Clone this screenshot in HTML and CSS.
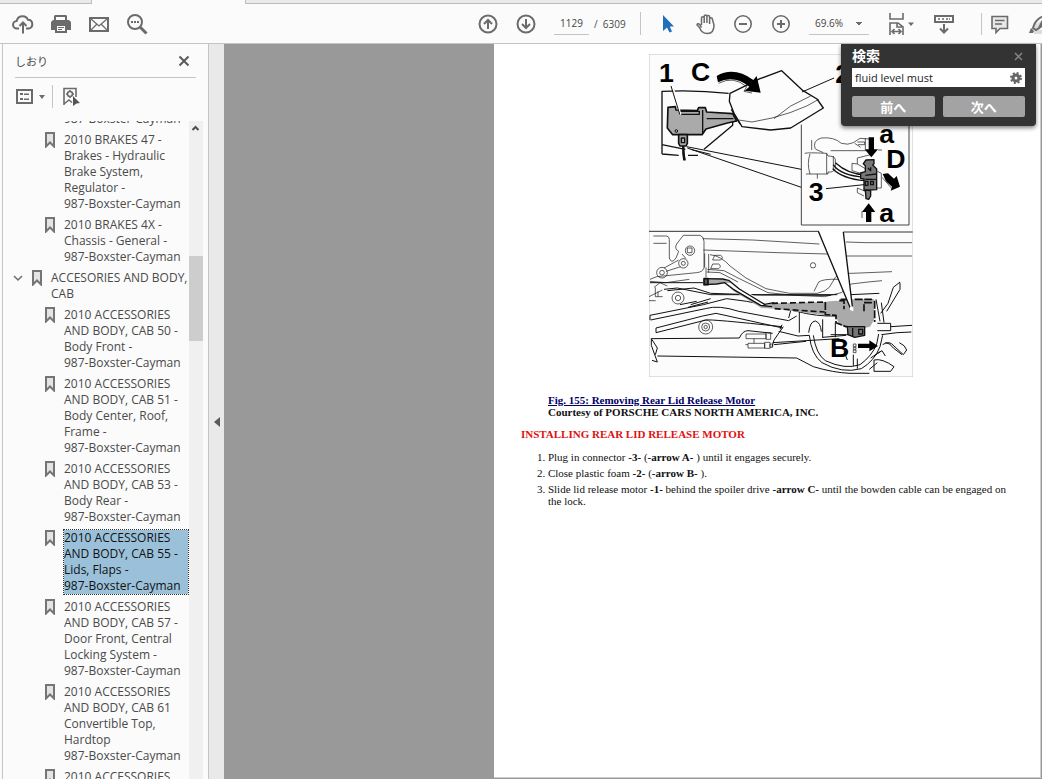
FILE: index.html
```
<!doctype html>
<html lang="ja">
  <head>
    <meta charset="utf-8">
    <meta name="viewport" content="width=device-width, initial-scale=1">
    <title>PDF Viewer</title>
    <link rel="stylesheet" href="styles.css">
  </head>
  <body>
    <div class="tabs">
      <div class="tab-active"></div>
    </div>

    <header class="toolbar">
      <div class="group">
        <button class="tool" aria-label="Upload">
          <svg width="22" height="22" viewBox="0 0 22 22" fill="none" stroke="#6b6b6b" stroke-width="2"><path d="M7 15.500H5a3.800 3.800 0 0 1-.3-7.600A6 6 0 0 1 16 6.800a4.400 4.400 0 0 1 .8 8.700H14M11 20.500V10M7.500 13 11 9.500l3.500 3.500"/></svg>
        </button>
        <button class="tool" aria-label="Print">
          <svg width="22" height="22" viewBox="0 0 22 22" fill="#6b6b6b"><path d="M5 2h11l1 1v4H4V3z"/><path d="M6 4h9v3H6z" fill="#fbfbfb"/><path d="M3 7h16l2 2v8h-4v-5H5v5H1V9z"/><path d="M5 12h12v8H5z"/><path d="M7 13h8v5H7z" fill="#fbfbfb"/><path d="M8 14h6v1H8zM8 16h4v1H8z"/></svg>
        </button>
        <button class="tool" aria-label="Mail">
          <svg width="22" height="22" viewBox="0 0 22 22" fill="none" stroke="#6b6b6b"><path d="M2 5h18v13H2z" stroke-width="2"/><path d="m3 6 8 7 8-7M3 17l6-6M19 17l-6-6" stroke-width="1.300"/></svg>
        </button>
        <button class="tool" aria-label="Search">
          <svg width="22" height="22" viewBox="0 0 22 22" fill="none" stroke="#6b6b6b"><circle cx="9" cy="9" r="7" stroke-width="2"/><path d="m14 14 6.500 6.500" stroke-width="3"/><path d="M5 9h2m1 0h2m1 0h2" stroke-width="2"/></svg>
        </button>
      </div>

      <div class="group nav">
        <button class="tool" aria-label="Previous page">
          <svg width="22" height="22" viewBox="0 0 22 22" fill="none" stroke="#6b6b6b" stroke-width="2"><circle cx="10" cy="11" r="8.500"/><path d="M10 16V7M6 11l4-4 4 4"/></svg>
        </button>
        <button class="tool" aria-label="Next page">
          <svg width="22" height="22" viewBox="0 0 22 22" fill="none" stroke="#6b6b6b" stroke-width="2"><circle cx="10" cy="11" r="8.500"/><path d="M10 6v9M6 11l4 4 4-4"/></svg>
        </button>
        <label class="pages"><input class="page-input" type="text" value="1129" aria-label="Page"><span>/&nbsp; 6309</span></label>
        <span class="sep"></span>
        <button class="tool" aria-label="Select">
          <svg width="22" height="22" viewBox="0 0 22 22" fill="#1f6fb9"><path d="M6 2v16l4-3.500 2.500 5 2.500-1-2.200-5H17z"/></svg>
        </button>
        <button class="tool" aria-label="Hand">
          <svg width="22" height="22" viewBox="0 0 22 22" fill="none" stroke="#6b6b6b" stroke-width="1.500"><path d="M6.500 12V5a1.300 1.300 0 0 1 2.700 0v5V3.300a1.300 1.300 0 0 1 2.700 0V10 3.800a1.300 1.300 0 0 1 2.700 0V11 6a1.300 1.300 0 0 1 2.700 0L19 12c0 5-2 8.500-6.500 8.500-5 0-6.500-2.500-8-6L2 12c0-2 2.500-2 4.500 2.500"/></svg>
        </button>
        <button class="tool" aria-label="Zoom out">
          <svg width="22" height="22" viewBox="0 0 22 22" fill="none" stroke="#6b6b6b" stroke-width="2"><circle cx="10" cy="11" r="8.200" stroke-width="1.600"/><path d="M6 11h8"/></svg>
        </button>
        <button class="tool" aria-label="Zoom in">
          <svg width="22" height="22" viewBox="0 0 22 22" fill="none" stroke="#6b6b6b" stroke-width="2"><circle cx="10" cy="11" r="8.200" stroke-width="1.600"/><path d="M6 11h8M10 7v8"/></svg>
        </button>
        <select class="zoom" aria-label="Zoom"><option>69.6%</option></select>
        <button class="tool fit" aria-label="Fit width">
          <svg width="30" height="22" viewBox="0 0 30 22" fill="none" stroke="#6b6b6b" stroke-width="1.600"><path d="M5 0v6h13V0M5 22V10h8l5 4v8M12 10v4h5M7 18.500h9M9.500 16 7 18.500 9.500 21M13.500 16l2.500 2.500-2.500 2.500"/><path d="M23 9.500h6l-3 3.500z" fill="#6b6b6b" stroke="none"/></svg>
        </button>
        <button class="tool scroll" aria-label="Scrolling">
          <svg width="22" height="22" viewBox="0 0 22 22" fill="none" stroke="#6b6b6b" stroke-width="2"><path d="M2 3h18v6H2z"/><path d="M5 6h2m2 0h2m2 0h2m1 0h1" stroke-width="1.500"/><path d="M11 11v8M7 15.500l4 4 4-4"/></svg>
        </button>
        <div class="comment-tools">
          <button class="tool" aria-label="Comment">
            <svg width="22" height="22" viewBox="0 0 22 22" fill="#e8e8e8" stroke="#6b6b6b" stroke-width="1.600"><path d="M3 3.500h15.500v12H11l-4 4v-4H3z"/><path d="M6 7.500h9.500M6 11h7"/></svg>
          </button>
          <button class="tool cut" aria-label="Highlight">
            <svg width="22" height="22" viewBox="0 0 22 22" fill="none" stroke="#6b6b6b" stroke-width="2"><path d="M5 17h17v4H5z" fill="#dcdcdc" stroke="none"/><path d="M5 12Q8 5 15 3M9 16 21 6M5 12l-1 3 3 2 3-2 4-8" fill="#dcdcdc"/><path d="m2 15 3 3-1 2H0z" fill="#6b6b6b" stroke="none"/></svg>
          </button>
        </div>
      </div>
    </header>

    <div class="main">
      <div class="rail"></div>
      <aside class="panel">
        <div class="panel-head">
          <span>しおり</span>
          <button class="tool" aria-label="Close">
            <svg width="12" height="12" viewBox="0 0 12 12" stroke="#5a5a5a" stroke-width="2"><path d="m1.500 1.500 9 9M10.500 1.500l-9 9"/></svg>
          </button>
        </div>
        <div class="panel-tools">
          <button class="tool options" aria-label="Options">
            <svg width="30" height="18" viewBox="0 0 30 18" fill="#6b6b6b"><path d="M2 2h15v13H2z" fill="none" stroke="#6b6b6b" stroke-width="2"/><path d="M5 5h3v2H5zM9 5.500h5V7H9zM5 10h3v2H5zM9 10.500h5V12H9zM24 7h6l-3 4z"/></svg>
          </button>
          <button class="tool" aria-label="Find bookmark">
            <svg width="20" height="20" viewBox="0 0 20 20" fill="none" stroke="#6b6b6b" stroke-width="1.600"><path d="M3 18V1.500h12V10M3 17l5-4 3 2.500"/><circle cx="9" cy="7" r="2.500"/><path d="M9 3v1.500m0 5V11M5 7h1.500m5 0H13"/><path d="m12 9 7 7-3.500.5L12 19z" fill="#555" stroke="none"/></svg>
          </button>
        </div>

        <div class="list-wrap">
          <ul class="list">
            <li><a href="#">987-Boxster-Cayman</a></li>
            <li><svg class="mark" viewBox="0 0 10 16"><path d="M1 1h8v13.500l-4-4-4 4z"/></svg><a href="#">2010 BRAKES 47 -<br>Brakes - Hydraulic<br>Brake System,<br>Regulator -<br>987-Boxster-Cayman</a></li>
            <li><svg class="mark" viewBox="0 0 10 16"><path d="M1 1h8v13.500l-4-4-4 4z"/></svg><a href="#">2010 BRAKES 4X -<br>Chassis - General -<br>987-Boxster-Cayman</a></li>
            <li class="parent">
              <svg class="chevron" viewBox="0 0 10 8"><path d="m1 2 4 4 4-4"/></svg>
              <svg class="mark" viewBox="0 0 10 16"><path d="M1 1h8v13.500l-4-4-4 4z"/></svg><a href="#">ACCESORIES AND BODY,<br>CAB</a></li>
            <li><svg class="mark" viewBox="0 0 10 16"><path d="M1 1h8v13.500l-4-4-4 4z"/></svg><a href="#">2010 ACCESSORIES<br>AND BODY, CAB 50 -<br>Body Front -<br>987-Boxster-Cayman</a></li>
            <li><svg class="mark" viewBox="0 0 10 16"><path d="M1 1h8v13.500l-4-4-4 4z"/></svg><a href="#">2010 ACCESSORIES<br>AND BODY, CAB 51 -<br>Body Center, Roof,<br>Frame -<br>987-Boxster-Cayman</a></li>
            <li><svg class="mark" viewBox="0 0 10 16"><path d="M1 1h8v13.500l-4-4-4 4z"/></svg><a href="#">2010 ACCESSORIES<br>AND BODY, CAB 53 -<br>Body Rear -<br>987-Boxster-Cayman</a></li>
            <li><svg class="mark" viewBox="0 0 10 16"><path d="M1 1h8v13.500l-4-4-4 4z"/></svg><a class="selected" href="#">2010 ACCESSORIES<br>AND BODY, CAB 55 -<br>Lids, Flaps -<br>987-Boxster-Cayman</a></li>
            <li><svg class="mark" viewBox="0 0 10 16"><path d="M1 1h8v13.500l-4-4-4 4z"/></svg><a href="#">2010 ACCESSORIES<br>AND BODY, CAB 57 -<br>Door Front, Central<br>Locking System -<br>987-Boxster-Cayman</a></li>
            <li><svg class="mark" viewBox="0 0 10 16"><path d="M1 1h8v13.500l-4-4-4 4z"/></svg><a href="#">2010 ACCESSORIES<br>AND BODY, CAB 61<br>Convertible Top,<br>Hardtop<br>987-Boxster-Cayman</a></li>
            <li><svg class="mark" viewBox="0 0 10 16"><path d="M1 1h8v13.500l-4-4-4 4z"/></svg><a href="#">2010 ACCESSORIES</a></li>
          </ul>
          <div class="scrollbar">
            <svg width="14" height="14" viewBox="0 0 14 14" fill="none" stroke="#505050" stroke-width="2"><path d="m3.500 9 3-3 3 3"/></svg>
            <div class="thumb"></div>
          </div>
        </div>
      </aside>

      <button class="splitter" aria-label="Collapse panel">
        <svg width="6" height="10" viewBox="0 0 6 10" fill="#5a5a5a"><path d="M6 0v10L0 5z"/></svg>
      </button>

      <main class="viewer">
        <article class="page">
          <figure>
            <svg class="drawing" width="264" height="323" viewBox="15 18 792 969" fill="none" stroke="#111" stroke-width="3" stroke-linejoin="round">
              <path d="M15 18h792v969H15z" fill="#fcfcfc" stroke="#c4c4c4"/>
              <!-- motor and foam cover -->
              <path d="M54 318V130q100-5 200 6M54 318l50 4M132 322h30M180 304l86-72V215M54 290l70 14" stroke-width="4"/>
              <path d="m258 136 90-44 65-24 64 60 42 25 19 27-98 60-60 6-86-10-24-40-14-36z" fill="#fcfcfc" stroke-width="4"/>
              <path d="m284 216 40 6 60-12 54-16 50-20 36-20M390 212l50-38 60-30" stroke-width="2"/>
              <path d="m474 132 96-42" stroke-width="3"/>
              <path d="m72 178 22-2 2 10 64 2 4-9h20l4 13 78 5 12 22-28 6-64 18-12 17H86l-16-20z" fill="#aaa" stroke-width="5"/>
              <path d="M106 190h60v9h-60M176 186v70M188 212h80M262 184l26 44" stroke-width="4"/>
              <path d="M104 260h26v26l-4 8h-18l-4-8z" fill="#aaa" stroke-width="5"/>
              <path d="M112 270h10v14h-10zM117 294l6 43" stroke-width="4"/>
              <path d="M118 294v22l3 21" stroke-width="7"/>
              <circle cx="97" cy="249" r="4"/>
              <path d="m86 116 24 84" stroke="#fff" stroke-width="5"/><path d="m81 114 26 84" stroke-width="3"/>
              <path d="M128 296 472 364M130 300l342 118M140 304l60 15" stroke-width="3"/>
              <path d="M218 84q52-30 110 12l10-12 12 50-48-6 14-12q-46-36-94-13z" fill="#000" stroke="none"/>
              <path d="M224 106q44-24 84 10l-8 14 24 5" stroke-width="2"/>
              <!-- inset with the connector -->
              <path d="M472 230v301h323V220" stroke="#444"/>
              <path d="M482 316q10-3 66 0l4 8q20 0 22 10v28q-6 12-22 10v6h-66M498 318q-10 28 0 60M548 316v62M568 324v40M503 276v30M520 378v14" stroke-width="2"/>
              <path d="M514 304q-10-26 18-34 38-4 60 16 20 6 36-2l20-13 30 2M516 304l22 10M560 308h120M632 286l18 12M640 282h22v8h-20" stroke-width="2"/>
              <path d="M568 350q20 32 94 38M566 362q30 30 96 36M574 344q40 36 90 36" stroke-width="4"/>
              <path d="m546 422 114-12" stroke-width="3"/>
              <path d="m640 330 40-10M640 330v18l24 14M640 348l-16-2v22l26 8M698 420h14v-44l-12-6M640 420l24 10M640 420v14l20 10M702 306h12" stroke-width="2"/>
              <path d="m666 336 24-1v12l-4 4 12 12v62l-38 2v-34l-10-2v-16l14-4v-18l-6-6z" fill="#777" stroke-width="4"/>
              <path d="m664 382 32-4M664 394h32M664 400h8v12h-8zM680 400h8v10h-8zM672 360l8 8v-10" stroke-width="4"/>
              <path d="m664 426 16 2v16l-6 10-8-2z" fill="#777" stroke-width="4"/>
              <g fill="#000" stroke="none">
                <path d="M674 268h16v36h12l-20 24-20-24h12zM666 522h16v-30h12l-20-26-20 26h12zM716 378l16-2 18 16 8-8 10 32-28 12 4-12-18-16z"/>
              </g>
              <path d="M664 270v34M654 510v-20M714 388l30 34" stroke-width="2"/>
              <g class="letters">
                <text x="45" y="102">1</text>
                <text x="141" y="98">C</text>
                <text x="494" y="460">3</text>
                <text x="706" y="285">a</text>
                <text x="727" y="361">D</text>
                <text x="706" y="521">a</text>
                <text x="574" y="106">2</text>
              </g>
              <!-- car body under the lid -->
              <g transform="translate(0 540)" stroke-width="2">
                <path d="M15 10h510M598 12h208" stroke="#333" stroke-width="3"/>
                <path d="M28 24h40q8 2 8 10v56q6 20 20 0l8-20q-14-8-6-22l20-26h50q12 4 12 18v80q-4 12-22 14l-120 12-20 8M28 46h40M176 32l150 4 200 12M178 66l224 8 150 4M606 42l60 2h138M606 84h198"/>
                <circle cx="54" cy="134" r="16"/><circle cx="54" cy="134" r="7"/>
                <circle cx="118" cy="106" r="14"/><circle cx="118" cy="106" r="6"/>
                <circle cx="138" cy="68" r="14"/><path d="M130 60h14v14h-14z"/>
                <circle cx="102" cy="210" r="18"/><circle cx="102" cy="210" r="8"/>
                <circle cx="185" cy="297" r="21"/><circle cx="185" cy="297" r="12"/><circle cx="185" cy="297" r="5"/>
                <circle cx="507" cy="112" r="8"/>
                <path d="m66 130 44-14M60 120l44-24M126 92l-12-14M18 160l48 4 70-10M30 178l18-14 22 10M34 178v28h22M15 206l40-20M42 190v16M15 218h20"/>
                <path d="M212 82h18q10 6 0 14h-24zM206 108h18q10 6 0 14h-24zM182 76v42M186 118v30M194 78v56M198 80q34 4 60 34l48 36 60 32 70 14h84q26-6 36-18l18-30q14-14 50-12l120-5"/>
                <path d="m190 124 50 4 42 22 90 44 80 8 90 4 50-12 30-26 50-6 42-4M188 132l40 2 54 28M510 190l14-28q14-10 60-8"/>
                <path d="M18 164h160M70 188l80-8 50 16 150 5 210 1M60 184l40-4 100 20h380" stroke-width="3"/>
                <path d="m18 262 160-32 70-18 60 8 150 30q60 16 118 14M20 276l164-34q40-12 100 8l150 28 24-14M36 300l140-36 40-8 200 44M36 314l150-38q14-3 228 20M132 238l60-16M140 230l60-18M108 230l50-10M18 262v14M36 300v14M414 290l-6 14" stroke-width="3"/>
                <path d="m22 332 18 28M22 332l264-2q10-22 26-22l74 8M22 332v20l18 50-16-5M40 360l-6 20M40 384l418 6 50 26q60 18 110 20h58M404 310l58 14 34-2M418 296l-28 40-6 20M390 350l96-10M386 344l200-12" stroke-width="3"/>
                <path d="M306 318h60v14h-60zM366 314h14v20h-14zM312 346h50v14h-50zM304 350h8M362 343h16v18h-16zM378 348h8v10h-8zM330 332v14"/>
                <path d="M494 314q4-34 20-35 16 5 18 32M496 322q6 58 38 82 60 34 118 18 40-24 56-66l8-34M508 322q8 56 36 76 60 28 104 12 36-26 50-62l6-30" stroke-width="3"/>
                <path d="M440 248l-6 22M466 248v66M536 274v56M574 284v44M536 328l70-6M560 320h80M600 370l10 26M628 380v34M640 392v30M690 396q24-6 60 20l-10 14h-50zM700 404l-24 20M716 350q20-14 34 4l28 26 10-14q-4-14-22-22M724 344q14 0 24 16l26 20M768 162l-20 16-16 48-22 30M768 164v20l-40 66M696 214l12 66M712 224l8 60M700 286h40v22h-40M740 296l64-4M712 320q50-8 90-8M620 200l86-4M724 384l-10-16-22 14M680 390l30-20" stroke-width="3"/>
                <path d="m180 152 56 2 18 4 32 26 76 48 30-6 150-4 34-4 14 3v44l-46-3-150-20-42-2-82-50-28-24-24 2-38 4z" fill="#aaa" stroke="none"/>
                <path d="m190 172 52-6 34 22 74 44 30 1-76-44-30-26z" fill="#fcfcfc" stroke="none"/>
                <path d="m180 152 56 1 18 4 32 26 76 46 28-5M180 170l38-2 24-4 26 20 82 48 34 4" stroke-width="4"/>
                <path d="M180 152h12v18h-12z" fill="#555" stroke-width="5"/>
                <path d="m384 226 160-4M392 242l150 10" stroke-width="5" stroke-dasharray="18 9"/>
                <path d="m544 222 42-4v-4h104v62l-12 20-16 4v20l-30 6-22-8v-20l-24-8-12-28-30-2z" fill="#aaa" stroke="none"/>
                <path d="M544 222v38l32 2v22l30 12 30 2M586 218h14v26M590 214h20M632 214h50v10h-22v26M692 218v64" stroke-width="5" stroke-dasharray="24 5"/>
                <path d="M610 296h52v26l-30 6-20-8zM626 300v24M644 304h12v14h-12z" fill="#777" stroke-width="4"/>
                <path d="m523 10 96 230 4 3 2-8-27-223z" fill="#fff" stroke="none"/>
                <path d="m523 10 96 230M598 12l27 223" stroke-width="4"/>
                <path d="m618 236 10 2v12l-10-4z" fill="#fff" stroke="none"/>
                <path d="M642 347h34v-10l26 17-26 16v-10h-34z" fill="#000" stroke="none"/>
                <path d="M628 348h8v8h-8zM628 358h8v6h-8zM628 366h8v8h-8z"/>
                <g class="letters"><text x="558" y="387">B</text></g>
              </g>
            </svg>
          </figure>
          <p class="caption"><a href="#">Fig. 155: Removing Rear Lid Release Motor</a><br>Courtesy of PORSCHE CARS NORTH AMERICA, INC.</p>
          <h1>INSTALLING REAR LID RELEASE MOTOR</h1>
          <ol>
            <li>Plug in connector <b>-3-</b> (<b>-arrow A-</b> ) until it engages securely.</li>
            <li>Close plastic foam <b>-2-</b> (<b>-arrow B-</b> ).</li>
            <li>Slide lid release motor <b>-1-</b> behind the spoiler drive <b>-arrow C-</b> until the bowden cable can be engaged on the lock.</li>
          </ol>
        </article>

        <form class="search">
          <div class="search-head">
            <label for="find">検索</label>
            <button type="button" class="tool" aria-label="Close search">
              <svg width="9" height="9" viewBox="0 0 9 9" stroke="#858585" stroke-width="1.500"><path d="m1 1 7 7M8 1 1 8"/></svg>
            </button>
          </div>
          <div class="search-box">
            <input id="find" type="text" value="fluid level must">
            <svg width="12" height="12" viewBox="0 0 12 12" fill="none" stroke="#666"><circle cx="6" cy="6" r="3" stroke-width="3"/><circle cx="6" cy="6" r="5" stroke-width="2" stroke-dasharray="2 1.930"/></svg>
          </div>
          <div class="search-buttons">
            <button type="button">前へ</button>
            <button type="button">次へ</button>
          </div>
        </form>
      </main>
    </div>
  </body>
</html>
```
FILE: styles.css
```
* {
  box-sizing: border-box;
}
body {
  margin: 0;
  height: 100vh;
  display: flex;
  flex-direction: column;
  overflow: hidden;
  background: #fbfbfb;
  color: #4a4a4a;
  font-family: "Open Sans", "Noto Sans CJK JP", sans-serif;
  font-size: 12px;
}
button {
  font-family: inherit;
  cursor: pointer;
}
svg {
  display: block;
}
.tabs {
  height: 4px;
  flex: none;
  background: #e9e9e9;
  border-bottom: 1px solid #bdbdbd;
}
.tab-active {
  width: 155px;
  height: 4px;
  margin-left: 91px;
  background: #fbfbfb;
  border-left: 1px solid #bdbdbd;
  border-right: 1px solid #bdbdbd;
}
.toolbar {
  flex: none;
  display: flex;
  height: 40px;
  padding-left: 12px;
  border-bottom: 1px solid #c4c4c4;
}
.group {
  display: flex;
  align-items: center;
  gap: 16px;
}
.nav {
  margin-left: auto;
}
.tool {
  flex: none;
  padding: 0;
  border: 0;
  background: none;
}
.pages {
  display: flex;
  align-items: center;
  gap: 5px;
  width: 70px;
  font-size: 10px;
  white-space: nowrap;
}
.page-input {
  width: 35px;
  height: 22px;
  padding: 0;
  border: 0;
  border-bottom: 1px solid #c4c4c4;
  background: none;
  color: #444;
  font: inherit;
  text-align: center;
}
.sep {
  width: 1px;
  height: 23px;
  background: #c4c4c4;
}
.zoom {
  width: 60px;
  height: 22px;
  padding: 0 6px;
  appearance: none;
  border: 0;
  border-bottom: 1px solid #c4c4c4;
  border-radius: 0;
  background: linear-gradient(#6b6b6b, #6b6b6b) no-repeat 47px 9px / 6px 1px,
    linear-gradient(#6b6b6b, #6b6b6b) no-repeat 48px 10px / 4px 1px,
    linear-gradient(#6b6b6b, #6b6b6b) no-repeat 49px 11px / 2px 1px;
  color: #444;
  font: inherit;
  font-size: 10px;
}
.scroll {
  width: 26px;
  padding: 0 2px;
}
.comment-tools {
  display: flex;
  gap: 18px;
  margin-left: 8px;
  padding-left: 7px;
  border-left: 1px solid #c4c4c4;
}
.cut {
  width: 13px;
  overflow: hidden;
}
.main {
  flex: 1;
  min-height: 0;
  display: flex;
}
.rail {
  width: 3px;
  border-right: 1px solid #c4c4c4;
}
.panel {
  width: 206px;
  flex: none;
  display: flex;
  flex-direction: column;
  border-right: 1px solid #c4c4c4;
}
.panel-head {
  flex: none;
  display: flex;
  align-items: center;
  justify-content: space-between;
  height: 34px;
  margin: 0 12px;
  padding-right: 6px;
  border-bottom: 1px solid #c4c4c4;
  font-size: 11px;
}
.panel-tools {
  flex: none;
  display: flex;
  align-items: center;
  gap: 8px;
  height: 43px;
  padding: 0 12px 6px;
}
.options {
  height: 23px;
  padding-right: 7px;
  border-right: 1px solid #c4c4c4;
}
.list-wrap {
  flex: 1;
  min-height: 0;
  display: flex;
  overflow: hidden;
}
.list {
  flex: 1;
  display: flex;
  flex-direction: column;
  gap: 5px;
  margin: -10px 0 0;
  padding: 0 1px 0 0;
  list-style: none;
}
.list li {
  flex: none;
  display: flex;
  gap: 9px;
  padding-left: 42px;
  line-height: 16px;
  white-space: nowrap;
}
.list li:first-child {
  padding-left: 61px;
}
.list .parent {
  padding-left: 10px;
}
.list a {
  flex: 1;
  color: #4a4a4a;
  text-decoration: none;
}
.list .selected {
  background: #9bc1da;
  color: #111;
  outline: 1px dotted #333;
}
.mark {
  flex: none;
  width: 10px;
  height: 16px;
  fill: #e4e4e4;
  stroke: #757575;
  stroke-width: 2;
}
.chevron {
  flex: none;
  width: 10px;
  height: 16px;
  fill: none;
  stroke: #6b6b6b;
  stroke-width: 1.5;
}
.scrollbar {
  width: 14px;
  flex: none;
  margin-right: 5px;
  background: #f0f0f0;
}
.thumb {
  height: 85px;
  margin-top: 121px;
  background: #cdcdcd;
}
.splitter {
  display: flex;
  align-items: center;
  justify-content: center;
  width: 15px;
  flex: none;
  padding: 20px 0 0;
  border: 0;
  background: #e9e9e9;
}
.viewer {
  flex: 1;
  position: relative;
  display: flex;
  background: #999;
}
.page {
  flex: 1;
  margin: 0 1px 1px 33%;
  padding: 10px 24px 0 27px;
  border-right: 1px solid #ccc;
  border-bottom: 1px solid #ccc;
  background: #fff;
  color: #111;
  font-family: "Liberation Serif", serif;
  font-size: 11px;
  line-height: 12px;
}
.page figure {
  margin: 0 0 17px 128px;
}
.letters {
  fill: #000;
  stroke: none;
  font-family: "Liberation Sans", sans-serif;
  font-size: 80px;
  font-weight: bold;
}
.caption {
  margin: 0 0 10px 27px;
  font-weight: bold;
}
.caption a {
  color: #000066;
}
.page h1 {
  margin: 0 0 11px;
  color: #e01010;
  font-size: 11px;
}
.page ol {
  display: flex;
  flex-direction: column;
  gap: 4px;
  margin: 0;
  padding-left: 27px;
}
.search {
  position: absolute;
  top: 0;
  right: 6px;
  width: 195px;
  padding: 0 11px 9px;
  border-radius: 0 0 4px 4px;
  background: #333;
  box-shadow: 0 2px 4px rgba(0, 0, 0, 0.5);
}
.search-head {
  display: flex;
  align-items: center;
  justify-content: space-between;
  height: 24px;
  padding-right: 2px;
  color: #fff;
  font-size: 14px;
  font-weight: bold;
  line-height: 20px;
}
.search-box {
  display: flex;
  align-items: center;
  height: 19px;
  padding: 0 3px;
  background: #fff;
}
.search-box input {
  flex: 1;
  min-width: 0;
  padding: 0;
  border: 0;
  outline: 0;
  color: #222;
  font: inherit;
  font-size: 11px;
}
.search-buttons {
  display: flex;
  gap: 8px;
  margin-top: 9px;
}
.search-buttons button {
  flex: 1;
  height: 21px;
  padding: 0;
  border: 0;
  border-radius: 2px;
  background: #a3a3a3;
  color: #fff;
  font-size: 13px;
  font-weight: bold;
  line-height: 20px;
}
```
